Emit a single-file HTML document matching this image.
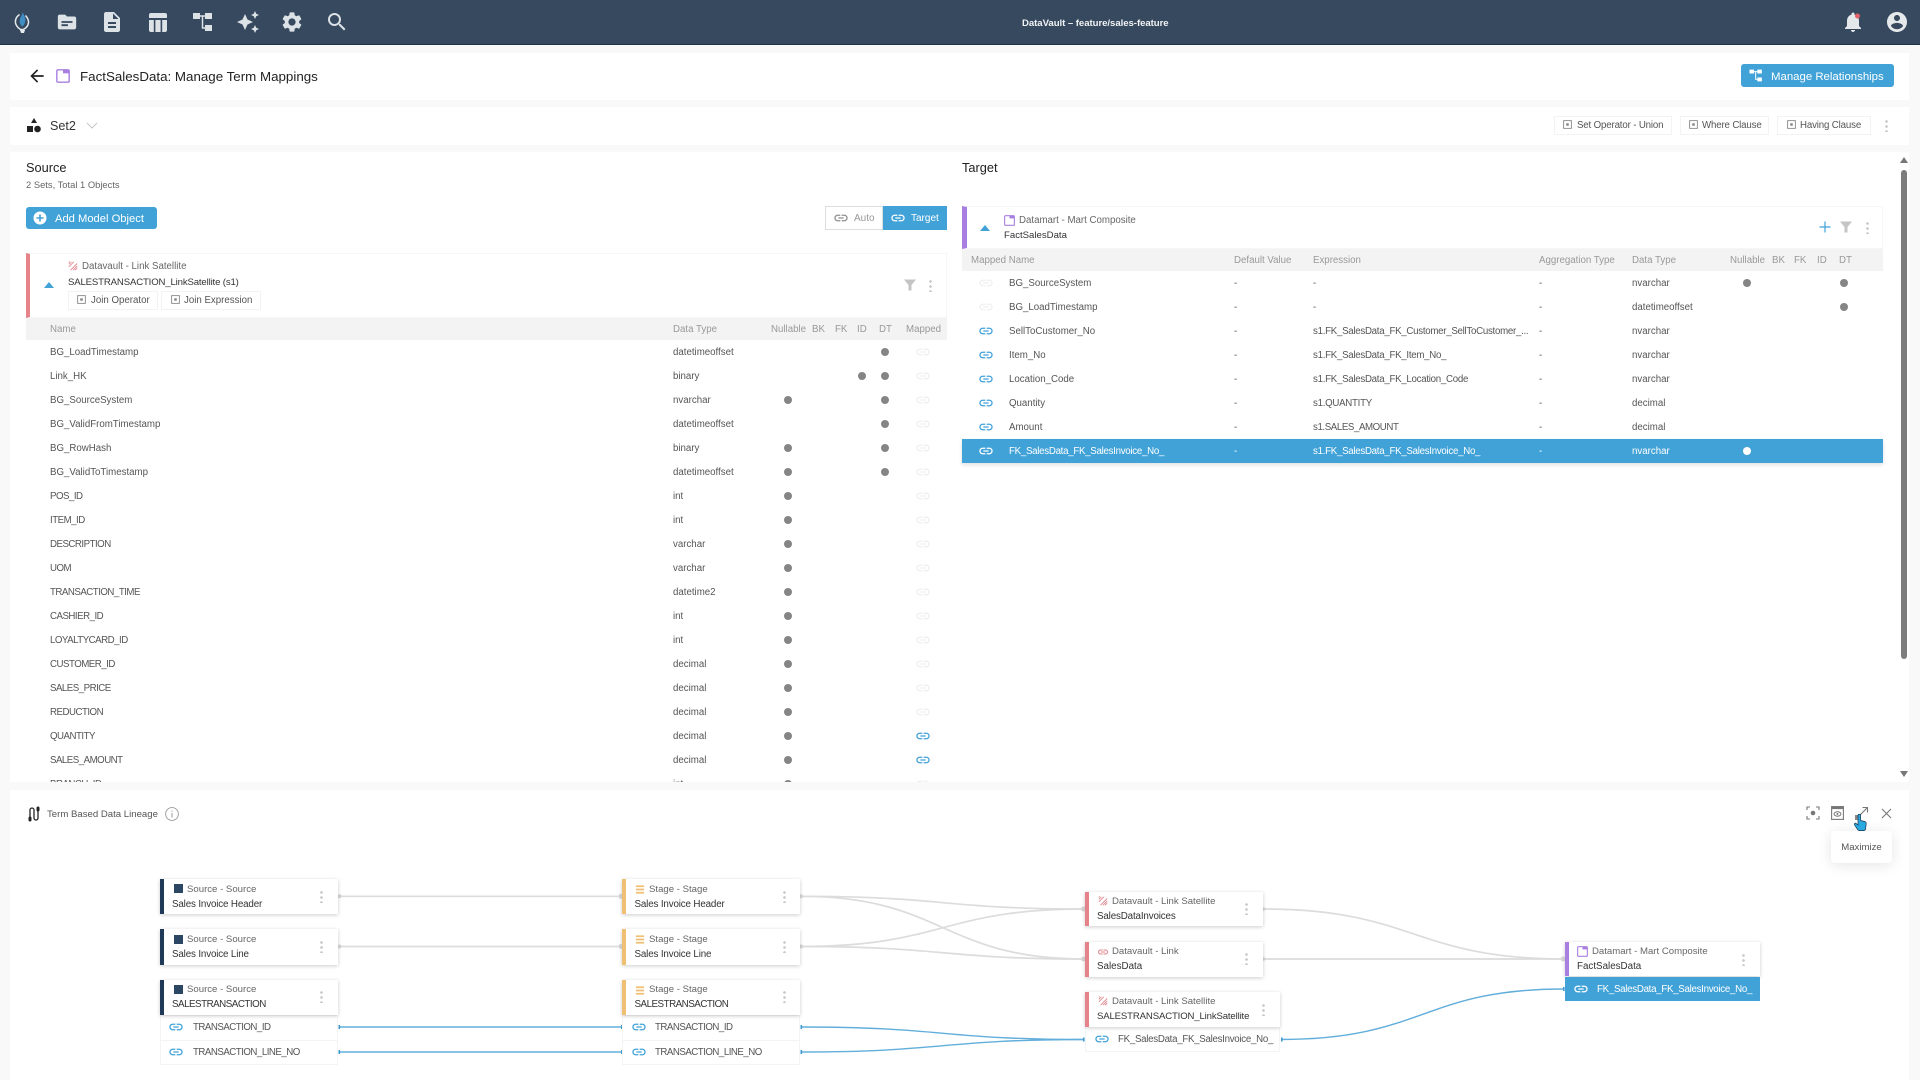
<!DOCTYPE html>
<html lang="en"><head><meta charset="utf-8"><title>FactSalesData: Manage Term Mappings</title>
<style>
*{box-sizing:border-box}
html,body{margin:0;padding:0}
html{background:#f9f9f9}
body{width:1920px;height:1080px;overflow:hidden;position:relative;background:#f9f9f9;font-family:"Liberation Sans",sans-serif;color:#555;font-size:9.7px;filter:blur(.35px)}
.a{position:absolute}
.t{position:absolute;white-space:nowrap;line-height:14px;height:14px;transform:translateY(1px)}
.p{position:absolute;background:#fff}
svg{position:absolute;overflow:visible;display:block}
.chip{position:absolute;background:#fff;border:1px solid #f3f3f3}
.r{position:absolute;left:0;width:1920px;height:24px;line-height:24px;white-space:nowrap}
.r span{position:absolute;top:1px}
.r i{position:absolute;top:8px;width:8px;height:8px;border-radius:50%;background:#858585}
.r svg{top:4px;width:16px;height:16px;fill:#efefef}
.r svg.on{fill:#41a2d8}
.u{letter-spacing:-.5px}
.x{letter-spacing:-.27px}
.w{letter-spacing:-.15px}
.s .n{left:50px}.s .y{left:673px}.s .dn{left:784px}.s .di{left:858px}.s .dd{left:881px}.s svg{left:915px}
.g .n{left:1009px;color:#555}.g .v{left:1234px}.g .e{left:1313px}.g .ag{left:1539px}.g .y{left:1632px}.g .dn{left:1743px}.g .dd{left:1840px}.g svg{left:978px}
.h{position:absolute;white-space:nowrap;line-height:14px;color:#999;font-size:9.7px;transform:translateY(1px)}
.node{position:absolute;background:#fff;box-shadow:0 1px 4px rgba(0,0,0,.2)}
.bar{position:absolute;left:0;top:0;bottom:0;width:4px}
.sub{position:absolute;background:#fff;border:1px solid #f4f4f4}
.nt{color:#666;font-size:10px}
.nn{color:#333;font-size:9.8px}
.dots{position:absolute;width:3px;height:13px;background:radial-gradient(circle,#c9c9c9 1.2px,transparent 1.5px) 0 0/3px 5px}
</style></head><body>
<svg width="0" height="0" style="position:absolute"><defs>
<symbol id="lk" viewBox="0 0 24 24"><path d="M3.900 12c0-1.710 1.390-3.100 3.100-3.100h4V7H7c-2.760 0-5 2.240-5 5s2.240 5 5 5h4v-1.900H7c-1.710 0-3.100-1.390-3.100-3.100zM8 13h8v-2H8v2zm9-6h-4v1.900h4c1.710 0 3.100 1.390 3.100 3.100s-1.390 3.100-3.100 3.100h-4V17h4c2.760 0 5-2.240 5-5s-2.240-5-5-5z"/></symbol>
<symbol id="chipi" viewBox="0 0 10 10"><rect x=".7" y=".7" width="8.600" height="8.600" fill="none" stroke="#888" stroke-width="1"/><rect x="3.600" y="3.600" width="2.800" height="2.800" fill="#888"/></symbol>
<symbol id="mart" viewBox="0 0 12 12"><rect x=".7" y=".7" width="10.600" height="10.600" rx="1" fill="none" stroke="#a87fe0" stroke-width="1.200"/><rect x="6" y=".7" width="5.300" height="3" fill="#a87fe0"/></symbol>
<symbol id="sat" viewBox="0 0 12 12"><g stroke="#e08a90" stroke-width="1.100" fill="none"><path d="M1 4 4 1M1 1.500 2 .5M1 7 7 1M6 11 11 6M8.500 11 11 8.500M3 11 11 3"/></g></symbol>
<symbol id="filt" viewBox="0 0 12 12"><path d="M0 .5h12L7.500 6v5.500h-3V6z" fill="#c4c4c4"/></symbol>
<symbol id="plain" viewBox="0 0 12 12"><rect width="12" height="12" fill="#2c4763"/></symbol>
<symbol id="stage" viewBox="0 0 12 12"><path d="M1 1h10v2.200H1zM1 4.900h10v2.200H1zM1 8.800h10V11H1z" fill="#efbf74"/></symbol>
</defs></svg>

<!-- top bar -->
<div class="a" style="left:0;top:0;width:1920px;height:44.500px;background:#36495e;border-bottom:1px solid #1f3347"></div>
<svg style="left:12px;top:11px" width="22" height="24" viewBox="0 0 22 24"><path d="M7.500 3.500C4 6 3 9 3.500 12c.6 3 3.500 5.500 5 6.500h3c2-1.200 4.800-3.500 5-6.800.2-3-1.200-5.200-3-7.200" fill="none" stroke="#e4e9ec" stroke-width="1.500"/><path d="M10.800 1c.5 2.500 2.200 4 2.500 7 .3 3-1 6-3 7.500-1.800-1.500-3-4-2.600-6.500.4-2.500 2.300-4.500 3.100-8z" fill="#3f8fc4"/><path d="M8 19h5l-1 3H9z" fill="#e4e9ec"/></svg>
<svg style="left:56px;top:11px" width="22" height="22" viewBox="0 0 24 24"><path d="M20 6h-8l-2-2H4c-1.100 0-2 .9-2 2v12c0 1.100.9 2 2 2h16c1.100 0 2-.9 2-2V8c0-1.100-.9-2-2-2z" fill="#dde2e7"/><path d="M6 11h12v2H6zM6 14.500h7v2H6z" fill="#36495e"/></svg>
<svg style="left:100px;top:10px" width="24" height="24" viewBox="0 0 24 24"><path fill="#dde2e7" d="M14 2H6c-1.100 0-1.990.9-1.990 2L4 20c0 1.100.89 2 1.990 2H18c1.100 0 2-.9 2-2V8l-6-6zm2 16H8v-2h8v2zm0-4H8v-2h8v2zm-3-5V3.500L18.500 9H13z"/></svg>
<svg style="left:148px;top:13px" width="20" height="19" viewBox="0 0 20 19"><path fill="#dde2e7" d="M3 0h14a2 2 0 0 1 2 2v3H1V2a2 2 0 0 1 2-2zM1 7h4.800v12H3a2 2 0 0 1-2-2zM7.400 7h5.200v12H7.400zM14.200 7H19v10a2 2 0 0 1-2 2h-2.800z"/></svg>
<svg style="left:193px;top:12px" width="20" height="20" viewBox="0 0 20 20"><path fill="#dde2e7" d="M0 1h7v6H0zM12 1h7v6h-7zM12 13h7v6h-7z"/><path d="M7 4h5M9.500 4v12h2.500" stroke="#dde2e7" stroke-width="1.500" fill="none"/></svg>
<svg style="left:236px;top:10px" width="24" height="24" viewBox="0 0 24 24"><path fill="#dde2e7" d="M19 9l1.250-2.750L23 5l-2.750-1.250L19 1l-1.250 2.750L15 5l2.750 1.250L19 9zm-7.500.5L9 4 6.500 9.500 1 12l5.500 2.500L9 20l2.500-5.500L17 12l-5.500-2.500zM19 15l-1.250 2.750L15 19l2.750 1.250L19 23l1.250-2.750L23 19l-2.750-1.250L19 15z"/></svg>
<svg style="left:280px;top:10px" width="24" height="24" viewBox="0 0 24 24"><path fill="#dde2e7" d="M19.140 12.940c.04-.3.06-.61.06-.94 0-.32-.02-.64-.07-.94l2.030-1.580c.18-.14.23-.41.12-.61l-1.920-3.320c-.12-.22-.37-.29-.59-.22l-2.390.96c-.5-.38-1.030-.7-1.620-.94l-.36-2.540c-.04-.24-.24-.41-.48-.41h-3.840c-.24 0-.43.17-.47.41l-.36 2.540c-.59.24-1.130.57-1.620.94l-2.390-.96c-.22-.08-.47 0-.59.22L2.740 8.870c-.12.21-.08.47.12.61l2.030 1.580c-.05.3-.09.63-.09.94s.02.64.07.94l-2.030 1.580c-.18.14-.23.41-.12.61l1.920 3.320c.12.22.37.29.59.22l2.390-.96c.5.38 1.030.7 1.620.94l.36 2.540c.05.24.24.41.48.41h3.840c.24 0 .44-.17.47-.41l.36-2.540c.59-.24 1.130-.56 1.620-.94l2.390.96c.22.08.47 0 .59-.22l1.920-3.320c.12-.22.07-.47-.12-.61l-2.010-1.580zM12 15.600c-1.980 0-3.600-1.620-3.600-3.600s1.620-3.600 3.600-3.600 3.600 1.620 3.600 3.600-1.620 3.600-3.600 3.600z"/></svg>
<svg style="left:325px;top:10px" width="24" height="24" viewBox="0 0 24 24"><path fill="#dde2e7" d="M15.500 14h-.79l-.28-.27C15.410 12.590 16 11.110 16 9.500 16 5.910 13.090 3 9.500 3S3 5.910 3 9.500 5.910 16 9.500 16c1.610 0 3.090-.59 4.230-1.570l.27.28v.79l5 4.990L20.490 19l-4.990-5zm-6 0C7.010 14 5 11.990 5 9.500S7.010 5 9.500 5 14 7.010 14 9.500 11.990 14 9.500 14z"/></svg>
<div class="t" style="left:1022px;top:16px;width:146px;text-align:center;color:#f1f3f5;font-weight:bold;font-size:9.600px;letter-spacing:-.05px">DataVault – feature/sales-feature</div>
<svg style="left:1841px;top:10px" width="24" height="24" viewBox="0 0 24 24"><path fill="#e6e9ec" d="M12 22c1.100 0 2-.9 2-2h-4c0 1.100.9 2 2 2zm6-6v-5c0-3.070-1.630-5.640-4.500-6.320V4c0-.83-.67-1.500-1.500-1.500s-1.500.67-1.500 1.500v.68C7.640 5.360 6 7.920 6 11v5l-2 2v1h16v-1l-2-2z"/><circle cx="16.500" cy="6" r="2.500" fill="#e2606a"/></svg>
<svg style="left:1885px;top:10px" width="24" height="24" viewBox="0 0 24 24"><path fill="#e6e9ec" d="M12 2C6.480 2 2 6.480 2 12s4.480 10 10 10 10-4.480 10-10S17.520 2 12 2zm0 3c1.660 0 3 1.340 3 3s-1.340 3-3 3-3-1.340-3-3 1.340-3 3-3zm0 14.200c-2.500 0-4.710-1.280-6-3.220.03-1.990 4-3.080 6-3.080 1.990 0 5.970 1.090 6 3.080-1.290 1.940-3.500 3.220-6 3.220z"/></svg>

<!-- panels -->
<div class="p" style="left:10px;top:53px;width:1899px;height:47px"></div>
<div class="p" style="left:10px;top:107px;width:1899px;height:38px"></div>
<div class="p" style="left:10px;top:152px;width:1899px;height:630px"></div>

<!-- title row -->
<svg style="left:27px;top:66px" width="20" height="20" viewBox="0 0 24 24"><path fill="#222" d="M20 11H7.830l5.590-5.590L12 4l-8 8 8 8 1.410-1.410L7.830 13H20v-2z"/></svg>
<svg style="left:56px;top:69px" width="14" height="14"><use href="#mart"/></svg>
<div class="t" style="left:80px;top:69px;color:#222;font-size:13.350px">FactSalesData: Manage Term Mappings</div>
<div class="a" style="left:1741px;top:64px;width:153px;height:23px;background:#41a2d8;border-radius:3px"></div>
<svg style="left:1749px;top:69px" width="14" height="13" viewBox="0 0 20 20"><path fill="#fff" d="M0 1h7v6H0zM12 1h7v6h-7zM12 13h7v6h-7z"/><path d="M7 4h5M9.500 4v12h2.500" stroke="#fff" stroke-width="1.500" fill="none"/></svg>
<div class="t" style="left:1771px;top:69px;color:#fff;font-size:11.400px">Manage Relationships</div>

<!-- set row -->
<svg style="left:27px;top:117px" width="14" height="16" viewBox="0 0 14 16"><path d="M7 1l3 5H4z M0 9h6v6H0z" fill="#222"/><circle cx="10.500" cy="12" r="3.300" fill="#222"/></svg>
<div class="t" style="left:50px;top:118px;color:#333;font-size:12.600px">Set2</div>
<svg style="left:86px;top:122px" width="12" height="7" viewBox="0 0 12 7"><path d="M1 1l5 5 5-5" fill="none" stroke="#c8c8c8" stroke-width="1.100"/></svg>
<div class="chip" style="left:1554px;top:116px;width:118px;height:19px"></div>
<svg style="left:1563px;top:120px" width="9" height="9"><use href="#chipi"/></svg>
<div class="t w" style="left:1577px;top:118px;font-size:9.700px">Set Operator - Union</div>
<div class="chip" style="left:1680px;top:116px;width:89px;height:19px"></div>
<svg style="left:1689px;top:120px" width="9" height="9"><use href="#chipi"/></svg>
<div class="t w" style="left:1702px;top:118px;font-size:9.700px">Where Clause</div>
<div class="chip" style="left:1777px;top:116px;width:94px;height:19px"></div>
<svg style="left:1787px;top:120px" width="9" height="9"><use href="#chipi"/></svg>
<div class="t w" style="left:1800px;top:118px;font-size:9.700px">Having Clause</div>
<div class="dots" style="left:1885px;top:119px"></div>

<!-- source head -->
<div class="t" style="left:26px;top:160px;color:#222;font-size:12.800px">Source</div>
<div class="t" style="left:26px;top:177px;color:#666;font-size:9.400px">2 Sets, Total 1 Objects</div>
<div class="a" style="left:26px;top:207px;width:131px;height:22px;background:#41a2d8;border-radius:3px"></div>
<svg style="left:33px;top:211px" width="14" height="14" viewBox="0 0 14 14"><circle cx="7" cy="7" r="6.500" fill="#fff"/><path d="M7 3.500v7M3.500 7h7" stroke="#41a2d8" stroke-width="1.600"/></svg>
<div class="t" style="left:55px;top:211px;color:#fff;font-size:11.200px">Add Model Object</div>
<div class="a" style="left:825px;top:206px;width:58px;height:24px;background:#fff;border:1px solid #ddd"></div>
<div class="a" style="left:883px;top:206px;width:64px;height:24px;background:#41a2d8"></div>
<svg style="left:833px;top:210px;fill:#8f8f8f" width="16" height="16"><use href="#lk"/></svg>
<div class="t" style="left:854px;top:211px;color:#999;font-size:10px">Auto</div>
<svg style="left:890px;top:210px;fill:#fff" width="16" height="16"><use href="#lk"/></svg>
<div class="t" style="left:911px;top:211px;color:#fff;font-size:10px">Target</div>

<!-- source card -->
<div class="a" style="left:26px;top:253px;width:921px;height:65px;background:#fff;border:1px solid #f6f6f6;border-left:4px solid #e5828a"></div>
<svg style="left:44px;top:282px" width="10" height="6" viewBox="0 0 10 6"><path d="M5 0l5 6H0z" fill="#41a2d8"/></svg>
<svg style="left:68px;top:261px" width="10" height="10"><use href="#sat"/></svg>
<div class="t nt" style="left:82px;top:259px;font-size:9.700px">Datavault - Link Satellite</div>
<div class="t w" style="left:68px;top:275px;color:#333;font-size:9.600px">SALESTRANSACTION_LinkSatellite (s1)</div>
<div class="chip" style="left:68px;top:291px;width:90px;height:19px"></div>
<svg style="left:77px;top:295px" width="9" height="9"><use href="#chipi"/></svg>
<div class="t" style="left:91px;top:293px;font-size:9.700px">Join Operator</div>
<div class="chip" style="left:161px;top:291px;width:100px;height:19px"></div>
<svg style="left:171px;top:295px" width="9" height="9"><use href="#chipi"/></svg>
<div class="t" style="left:184px;top:293px;font-size:9.700px">Join Expression</div>
<svg style="left:904px;top:279px" width="12" height="12"><use href="#filt"/></svg>
<div class="dots" style="left:929px;top:279px"></div>

<div class="a" style="left:26px;top:318px;width:921px;height:22px;background:#f3f3f3"></div>
<div class="h" style="left:50px;top:322px">Name</div>
<div class="h" style="left:673px;top:322px">Data Type</div>
<div class="h" style="left:771px;top:322px">Nullable</div>
<div class="h" style="left:812px;top:322px">BK</div>
<div class="h" style="left:835px;top:322px">FK</div>
<div class="h" style="left:857px;top:322px">ID</div>
<div class="h" style="left:879px;top:322px">DT</div>
<div class="h" style="left:906px;top:322px">Mapped</div>

<div class="a s" style="left:0;top:0;width:1920px;height:782px;overflow:hidden">
<div class="r" style="top:340px"><span class="n">BG_LoadTimestamp</span><span class="y">datetimeoffset</span><i class="dd"></i><svg><use href="#lk"/></svg></div>
<div class="r" style="top:364px"><span class="n">Link_HK</span><span class="y">binary</span><i class="di"></i><i class="dd"></i><svg><use href="#lk"/></svg></div>
<div class="r" style="top:388px"><span class="n">BG_SourceSystem</span><span class="y">nvarchar</span><i class="dn"></i><i class="dd"></i><svg><use href="#lk"/></svg></div>
<div class="r" style="top:412px"><span class="n">BG_ValidFromTimestamp</span><span class="y">datetimeoffset</span><i class="dd"></i><svg><use href="#lk"/></svg></div>
<div class="r" style="top:436px"><span class="n">BG_RowHash</span><span class="y">binary</span><i class="dn"></i><i class="dd"></i><svg><use href="#lk"/></svg></div>
<div class="r" style="top:460px"><span class="n">BG_ValidToTimestamp</span><span class="y">datetimeoffset</span><i class="dn"></i><i class="dd"></i><svg><use href="#lk"/></svg></div>
<div class="r" style="top:484px"><span class="n u">POS_ID</span><span class="y">int</span><i class="dn"></i><svg><use href="#lk"/></svg></div>
<div class="r" style="top:508px"><span class="n u">ITEM_ID</span><span class="y">int</span><i class="dn"></i><svg><use href="#lk"/></svg></div>
<div class="r" style="top:532px"><span class="n u">DESCRIPTION</span><span class="y">varchar</span><i class="dn"></i><svg><use href="#lk"/></svg></div>
<div class="r" style="top:556px"><span class="n u">UOM</span><span class="y">varchar</span><i class="dn"></i><svg><use href="#lk"/></svg></div>
<div class="r" style="top:580px"><span class="n u">TRANSACTION_TIME</span><span class="y">datetime2</span><i class="dn"></i><svg><use href="#lk"/></svg></div>
<div class="r" style="top:604px"><span class="n u">CASHIER_ID</span><span class="y">int</span><i class="dn"></i><svg><use href="#lk"/></svg></div>
<div class="r" style="top:628px"><span class="n u">LOYALTYCARD_ID</span><span class="y">int</span><i class="dn"></i><svg><use href="#lk"/></svg></div>
<div class="r" style="top:652px"><span class="n u">CUSTOMER_ID</span><span class="y">decimal</span><i class="dn"></i><svg><use href="#lk"/></svg></div>
<div class="r" style="top:676px"><span class="n u">SALES_PRICE</span><span class="y">decimal</span><i class="dn"></i><svg><use href="#lk"/></svg></div>
<div class="r" style="top:700px"><span class="n u">REDUCTION</span><span class="y">decimal</span><i class="dn"></i><svg><use href="#lk"/></svg></div>
<div class="r" style="top:724px"><span class="n u">QUANTITY</span><span class="y">decimal</span><i class="dn"></i><svg class="on"><use href="#lk"/></svg></div>
<div class="r" style="top:748px"><span class="n u">SALES_AMOUNT</span><span class="y">decimal</span><i class="dn"></i><svg class="on"><use href="#lk"/></svg></div>
<div class="r" style="top:772px"><span class="n u">BRANCH_ID</span><span class="y">int</span><i class="dn"></i><svg><use href="#lk"/></svg></div>
</div>

<!-- target -->
<div class="t" style="left:962px;top:160px;color:#222;font-size:12.800px">Target</div>
<div class="a" style="left:962px;top:206px;width:921px;height:43px;background:#fff;border:1px solid #f6f6f6;border-left:5px solid #a87fe0"></div>
<svg style="left:980px;top:225px" width="10" height="6" viewBox="0 0 10 6"><path d="M5 0l5 6H0z" fill="#41a2d8"/></svg>
<svg style="left:1004px;top:215px" width="11" height="11"><use href="#mart"/></svg>
<div class="t nt" style="left:1019px;top:213px;font-size:9.700px">Datamart - Mart Composite</div>
<div class="t" style="left:1004px;top:228px;color:#333;font-size:9.600px">FactSalesData</div>
<svg style="left:1819px;top:221px" width="12" height="12" viewBox="0 0 12 12"><path d="M6 .5v11M.5 6h11" stroke="#41a2d8" stroke-width="1.200"/></svg>
<svg style="left:1840px;top:221px" width="12" height="12"><use href="#filt"/></svg>
<div class="dots" style="left:1866px;top:221px"></div>

<div class="a" style="left:962px;top:249px;width:921px;height:22px;background:#f3f3f3"></div>
<div class="h" style="left:971px;top:253px">Mapped Name</div>
<div class="h" style="left:1234px;top:253px">Default Value</div>
<div class="h" style="left:1313px;top:253px">Expression</div>
<div class="h" style="left:1539px;top:253px">Aggregation Type</div>
<div class="h" style="left:1632px;top:253px">Data Type</div>
<div class="h" style="left:1730px;top:253px">Nullable</div>
<div class="h" style="left:1772px;top:253px">BK</div>
<div class="h" style="left:1794px;top:253px">FK</div>
<div class="h" style="left:1817px;top:253px">ID</div>
<div class="h" style="left:1839px;top:253px">DT</div>

<div class="a" style="left:962px;top:439px;width:921px;height:24px;background:#41a2d8;box-shadow:0 2px 4px rgba(0,0,0,.12)"></div>
<div class="g">
<div class="r" style="top:271px"><svg><use href="#lk"/></svg><span class="n">BG_SourceSystem</span><span class="v">-</span><span class="e">-</span><span class="ag">-</span><span class="y">nvarchar</span><i class="dn"></i><i class="dd"></i></div>
<div class="r" style="top:295px"><svg><use href="#lk"/></svg><span class="n">BG_LoadTimestamp</span><span class="v">-</span><span class="e">-</span><span class="ag">-</span><span class="y">datetimeoffset</span><i class="dd"></i></div>
<div class="r" style="top:319px"><svg class="on"><use href="#lk"/></svg><span class="n">SellToCustomer_No</span><span class="v">-</span><span class="e x">s1.FK_SalesData_FK_Customer_SellToCustomer_...</span><span class="ag">-</span><span class="y">nvarchar</span></div>
<div class="r" style="top:343px"><svg class="on"><use href="#lk"/></svg><span class="n">Item_No</span><span class="v">-</span><span class="e x">s1.FK_SalesData_FK_Item_No_</span><span class="ag">-</span><span class="y">nvarchar</span></div>
<div class="r" style="top:367px"><svg class="on"><use href="#lk"/></svg><span class="n">Location_Code</span><span class="v">-</span><span class="e x">s1.FK_SalesData_FK_Location_Code</span><span class="ag">-</span><span class="y">nvarchar</span></div>
<div class="r" style="top:391px"><svg class="on"><use href="#lk"/></svg><span class="n">Quantity</span><span class="v">-</span><span class="e x">s1.QUANTITY</span><span class="ag">-</span><span class="y">decimal</span></div>
<div class="r" style="top:415px"><svg class="on"><use href="#lk"/></svg><span class="n">Amount</span><span class="v">-</span><span class="e" style="letter-spacing:-.4px">s1.SALES_AMOUNT</span><span class="ag">-</span><span class="y">decimal</span></div>
<div class="r" style="top:439px;color:#fff"><svg style="fill:#fff"><use href="#lk"/></svg><span class="n x" style="color:#fff">FK_SalesData_FK_SalesInvoice_No_</span><span class="v">-</span><span class="e x">s1.FK_SalesData_FK_SalesInvoice_No_</span><span class="ag">-</span><span class="y">nvarchar</span><i class="dn" style="background:#fff"></i></div>
</div>

<!-- scrollbar -->
<svg style="left:1900px;top:157px" width="8" height="6" viewBox="0 0 8 6"><path d="M4 0l4 6H0z" fill="#777"/></svg>
<div class="a" style="left:1901px;top:170px;width:6px;height:489px;background:#7d7d7d;border-radius:3px"></div>
<svg style="left:1900px;top:771px" width="8" height="6" viewBox="0 0 8 6"><path d="M4 6l4-6H0z" fill="#777"/></svg>

<!-- lineage panel -->
<div class="p" style="left:10px;top:790px;width:1899px;height:290px"></div>
<svg style="left:27px;top:806px" width="14" height="16" viewBox="0 0 14 16"><path d="M3 13V4a2 2 0 0 1 4 0v8a2 2 0 0 0 4 0V3" fill="none" stroke="#222" stroke-width="1.300"/><rect x="1.500" y="10.500" width="3" height="5" rx="1.500" fill="#222"/><rect x="9.500" y=".5" width="3" height="5" rx="1.500" fill="#222"/></svg>
<div class="t" style="left:47px;top:807px;color:#555;font-size:9.600px">Term Based Data Lineage</div>
<svg style="left:165px;top:807px" width="14" height="14" viewBox="0 0 14 14"><circle cx="7" cy="7" r="6.400" fill="none" stroke="#999" stroke-width=".9"/><path d="M7 6v4.500M7 3.500v1.200" stroke="#999" stroke-width="1"/></svg>

<svg style="left:1806px;top:806px" width="14" height="14" viewBox="0 0 14 14"><path d="M1 4V1h3M10 1h3v3M13 10v3h-3M4 13H1v-3" fill="none" stroke="#777" stroke-width="1.100"/><circle cx="7" cy="7" r="2.300" fill="#777"/></svg>
<svg style="left:1831px;top:806px" width="13" height="14" viewBox="0 0 13 14"><rect x=".6" y=".6" width="11.800" height="12.800" fill="none" stroke="#777" stroke-width="1.100"/><rect x=".6" y=".6" width="11.800" height="2.500" fill="#777"/><ellipse cx="6.500" cy="8" rx="3.400" ry="2.200" fill="none" stroke="#777"/><circle cx="6.500" cy="8" r="1" fill="#777"/></svg>
<svg style="left:1854px;top:806px" width="15" height="15" viewBox="0 0 15 15"><path d="M2 13 13 2M8.500 1.500h5v5" fill="none" stroke="#777" stroke-width="1.100"/><rect x="1" y="9" width="4" height="5" fill="#888"/></svg>
<svg style="left:1881px;top:808px" width="11" height="11" viewBox="0 0 11 11"><path d="M1 1l9 9M10 1l-9 9" stroke="#777" stroke-width="1.100"/></svg>
<div class="a" style="left:1831px;top:831px;width:61px;height:32px;background:#fff;border-radius:4px;box-shadow:0 2px 14px rgba(0,0,0,.11)"></div>
<div class="t" style="left:1831px;top:840px;width:61px;text-align:center;font-size:9.600px;color:#555">Maximize</div>
<svg style="left:1854px;top:814px" width="13" height="17" viewBox="0 0 13 17"><path d="M4 1.500a1.300 1.300 0 0 1 2.600 0v5l4 1c1.200.4 1.800 1.200 1.600 2.500L11.500 15c-.2 1-1 1.600-2 1.600H5.500c-.8 0-1.400-.3-1.900-1L.5 10.800c-.6-1 .7-2.200 1.700-1.300L4 11z" fill="#29a9e0" stroke="#15344f" stroke-width=".7"/></svg>

<!-- connectors -->
<svg style="left:0;top:0" width="1920" height="1080" fill="none">
<g stroke="#dcdcdc" stroke-width="1.700">
<path d="M339 896.300H622M339 946.500H622"/>
<path d="M801 896.300C943 896.300 943 909 1084 909"/>
<path d="M801 896.300C943 896.300 943 959 1084 959"/>
<path d="M801 946.500C943 946.500 943 909 1084 909"/>
<path d="M801 946.500C943 946.500 943 959 1084 959"/>
<path d="M1263 909C1414 909 1414 959 1564 959"/>
<path d="M1263 959H1564"/>
</g>
<g fill="#d8d8d8">
<circle cx="339.500" cy="896.300" r="2"/><circle cx="339.500" cy="946.500" r="2"/><circle cx="621" cy="896.300" r="2.500"/><circle cx="621" cy="946.500" r="2.500"/>
<circle cx="801" cy="896.300" r="2"/><circle cx="801" cy="946.500" r="2"/><circle cx="1083.500" cy="909" r="2.500"/><circle cx="1083.500" cy="959" r="2.500"/>
<circle cx="1263.500" cy="909" r="1.800"/><circle cx="1263.500" cy="959" r="1.800"/><circle cx="1563" cy="959" r="2.500"/>
</g>
<g stroke="#62aedb" stroke-width="1.400">
<path d="M339 1027H622M339 1052H622"/>
<path d="M801 1027C943 1027 943 1039.500 1084 1039.500"/>
<path d="M801 1052C943 1052 943 1039.500 1084 1039.500"/>
<path d="M1281 1039.500C1423 1039.500 1423 989 1564 989"/>
</g>
<g fill="#3f9ad2">
<rect x="338.500" y="1025" width="1.600" height="4"/><rect x="338.500" y="1050" width="1.600" height="4"/><rect x="621" y="1025" width="1.600" height="4"/><rect x="621" y="1050" width="1.600" height="4"/>
<rect x="800.500" y="1025" width="1.600" height="4"/><rect x="800.500" y="1050" width="1.600" height="4"/><rect x="1083" y="1037.500" width="1.600" height="4"/><rect x="1281" y="1037.500" width="1.600" height="4"/><rect x="1563" y="987" width="1.600" height="4"/>
</g>
</svg>

<!-- source nodes -->
<div class="node" style="left:160px;top:879px;width:178px;height:35px"><div class="bar" style="background:#1f3a58"></div></div>
<svg style="left:174px;top:884px" width="9" height="9"><use href="#plain"/></svg>
<div class="t nt" style="left:187px;top:882px;font-size:9.600px">Source - Source</div>
<div class="t nn w" style="left:172px;top:897px">Sales Invoice Header</div>
<div class="dots" style="left:320px;top:890px"></div>

<div class="node" style="left:160px;top:929px;width:178px;height:36px"><div class="bar" style="background:#1f3a58"></div></div>
<svg style="left:174px;top:935px" width="9" height="9"><use href="#plain"/></svg>
<div class="t nt" style="left:187px;top:932px;font-size:9.600px">Source - Source</div>
<div class="t nn w" style="left:172px;top:947px">Sales Invoice Line</div>
<div class="dots" style="left:320px;top:940px"></div>

<div class="sub" style="left:160px;top:1015px;width:178px;height:26px"></div>
<div class="sub" style="left:160px;top:1040px;width:178px;height:25px"></div>
<div class="node" style="left:160px;top:980px;width:178px;height:35px"><div class="bar" style="background:#1f3a58"></div></div>
<svg style="left:174px;top:985px" width="9" height="9"><use href="#plain"/></svg>
<div class="t nt" style="left:187px;top:982px;font-size:9.600px">Source - Source</div>
<div class="t nn u" style="left:172px;top:997px">SALESTRANSACTION</div>
<div class="dots" style="left:320px;top:990px"></div>
<svg style="left:168px;top:1019px;fill:#41a2d8" width="16" height="16"><use href="#lk"/></svg>
<div class="t u" style="left:193px;top:1020px">TRANSACTION_ID</div>
<svg style="left:168px;top:1044px;fill:#41a2d8" width="16" height="16"><use href="#lk"/></svg>
<div class="t u" style="left:193px;top:1045px">TRANSACTION_LINE_NO</div>

<!-- stage nodes -->
<div class="node" style="left:622px;top:879px;width:178px;height:35px"><div class="bar" style="background:#efbf74"></div></div>
<svg style="left:635px;top:884px" width="10" height="11"><use href="#stage"/></svg>
<div class="t nt" style="left:649px;top:882px;font-size:9.600px">Stage - Stage</div>
<div class="t nn w" style="left:634.500px;top:897px">Sales Invoice Header</div>
<div class="dots" style="left:783px;top:890px"></div>

<div class="node" style="left:622px;top:929px;width:178px;height:36px"><div class="bar" style="background:#efbf74"></div></div>
<svg style="left:635px;top:934px" width="10" height="11"><use href="#stage"/></svg>
<div class="t nt" style="left:649px;top:932px;font-size:9.600px">Stage - Stage</div>
<div class="t nn w" style="left:634.500px;top:947px">Sales Invoice Line</div>
<div class="dots" style="left:783px;top:940px"></div>

<div class="sub" style="left:622px;top:1015px;width:178px;height:26px"></div>
<div class="sub" style="left:622px;top:1040px;width:178px;height:25px"></div>
<div class="node" style="left:622px;top:980px;width:178px;height:35px"><div class="bar" style="background:#efbf74"></div></div>
<svg style="left:635px;top:985px" width="10" height="11"><use href="#stage"/></svg>
<div class="t nt" style="left:649px;top:982px;font-size:9.600px">Stage - Stage</div>
<div class="t nn u" style="left:634.500px;top:997px">SALESTRANSACTION</div>
<div class="dots" style="left:783px;top:990px"></div>
<svg style="left:631px;top:1019px;fill:#41a2d8" width="16" height="16"><use href="#lk"/></svg>
<div class="t u" style="left:655px;top:1020px">TRANSACTION_ID</div>
<svg style="left:631px;top:1044px;fill:#41a2d8" width="16" height="16"><use href="#lk"/></svg>
<div class="t u" style="left:655px;top:1045px">TRANSACTION_LINE_NO</div>

<!-- vault nodes -->
<div class="node" style="left:1085px;top:892px;width:178px;height:34px"><div class="bar" style="background:#e5828a"></div></div>
<svg style="left:1098px;top:896px" width="10" height="10"><use href="#sat"/></svg>
<div class="t nt" style="left:1112px;top:894px;font-size:9.600px">Datavault - Link Satellite</div>
<div class="t nn w" style="left:1097px;top:909px">SalesDataInvoices</div>
<div class="dots" style="left:1245px;top:902px"></div>

<div class="node" style="left:1085px;top:942px;width:178px;height:35px"><div class="bar" style="background:#e5828a"></div></div>
<svg style="left:1097px;top:946px;fill:#e5828a" width="12" height="12"><use href="#lk"/></svg>
<div class="t nt" style="left:1112px;top:944px;font-size:9.600px">Datavault - Link</div>
<div class="t nn" style="left:1097px;top:959px">SalesData</div>
<div class="dots" style="left:1245px;top:952px"></div>

<div class="sub" style="left:1085px;top:1026px;width:195px;height:26px"></div>
<div class="node" style="left:1085px;top:992px;width:195px;height:35px"><div class="bar" style="background:#e5828a"></div></div>
<svg style="left:1098px;top:996px" width="10" height="10"><use href="#sat"/></svg>
<div class="t nt" style="left:1112px;top:994px;font-size:9.600px">Datavault - Link Satellite</div>
<div class="t nn w" style="left:1097px;top:1009px;font-size:9.600px">SALESTRANSACTION_LinkSatellite</div>
<div class="dots" style="left:1262px;top:1003px"></div>
<svg style="left:1094px;top:1031px;fill:#41a2d8" width="16" height="16"><use href="#lk"/></svg>
<div class="t x" style="left:1118px;top:1032px">FK_SalesData_FK_SalesInvoice_No_</div>

<!-- mart node -->
<div class="node" style="left:1565px;top:942px;width:195px;height:34px"><div class="bar" style="background:#a87fe0"></div></div>
<svg style="left:1577px;top:946px" width="11" height="11"><use href="#mart"/></svg>
<div class="t nt" style="left:1592px;top:944px;font-size:9.600px">Datamart - Mart Composite</div>
<div class="t nn" style="left:1577px;top:959px">FactSalesData</div>
<div class="dots" style="left:1742px;top:953px"></div>
<div class="a" style="left:1565px;top:977px;width:195px;height:24px;background:#41a2d8"></div>
<svg style="left:1573px;top:981px;fill:#fff" width="16" height="16"><use href="#lk"/></svg>
<div class="t x" style="left:1597px;top:982px;color:#fff">FK_SalesData_FK_SalesInvoice_No_</div>
</body></html>
